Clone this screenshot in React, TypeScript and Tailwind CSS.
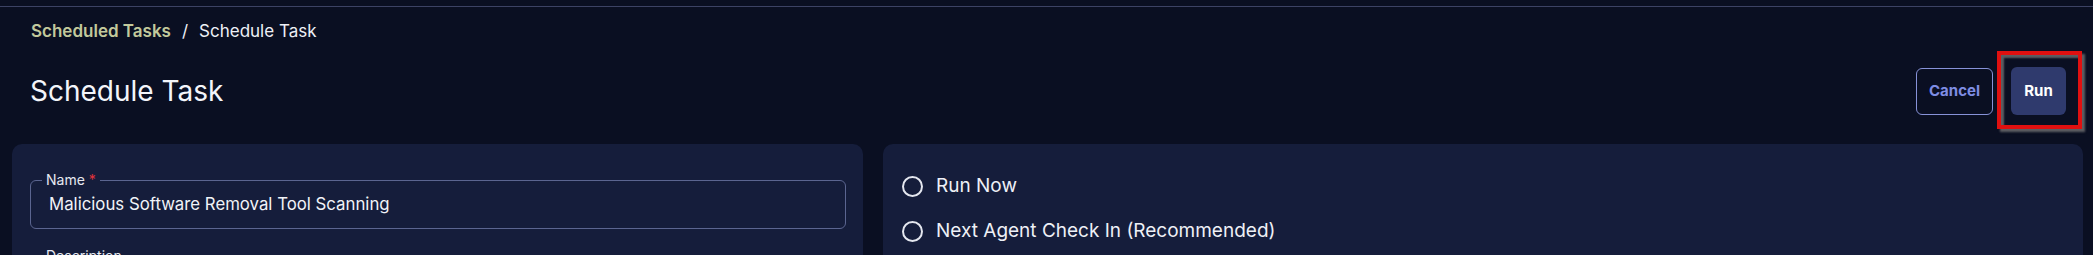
import React from 'react'

function Radio({ label }: { label: string }) {
  return (
    <label className="flex h-[45px] items-center gap-[13px] cursor-pointer">
      <span className="h-[21px] w-[21px] rounded-full border-2 border-[#e4e7ef]" />
      <span className="text-[19px] text-[#eef0f6]">{label}</span>
    </label>
  )
}

function Field({ label, value, required }: { label: string; value?: string; required?: boolean }) {
  return (
    <div className="relative flex h-[49px] items-center rounded-[6px] border border-[#5b6590] pl-[18px]">
      <span className="absolute -top-[10px] left-[11px] bg-[#151d3b] px-[4px] text-[14px] leading-[18px] text-[#e6e8f0]">
        {label}
        {required && <span className="ml-[4px] text-[#e0323a]">*</span>}
      </span>
      <span className="text-[16.8px] text-[#f1f3f8]">{value}</span>
    </div>
  )
}

export default function App() {
  return (
    <div className="h-[255px] w-[2093px] overflow-hidden bg-[#0a0f22] font-['Inter',sans-serif]">
      <div className="h-[7px] border-b border-[#3c4264]" />

      {/* Breadcrumb */}
      <div className="mt-[12px] flex h-[24px] items-center gap-[11px] pl-[31px] text-[17px] leading-[24px]">
        <span className="font-semibold text-[#c2c99c]">Scheduled Tasks</span>
        <span className="text-[#eef0f6]">/</span>
        <span className="text-[#eef0f6]">Schedule Task</span>
      </div>

      {/* Title row */}
      <div className="mt-[24px] flex h-[48px] items-center justify-between pl-[30px] pr-[27px]">
        <h1 className="text-[28px] font-normal text-[#f3f5fa]">Schedule Task</h1>
        <div className="flex items-center gap-[18px]">
          <button className="h-[47px] w-[77px] rounded-[6px] border border-[#8792d8] text-[15px] font-bold text-[#7f8de4]">
            Cancel
          </button>
          <div className="relative">
            <button className="h-[48px] w-[55px] rounded-[6px] bg-[#2f3a6d] text-[15px] font-bold text-white">
              Run
            </button>
            <div className="pointer-events-none absolute -top-[16px] -left-[14px] -right-[16px] -bottom-[14px] border-4 border-[#e01010] shadow-[3px_3px_2px_rgba(120,120,120,0.75),inset_3px_3px_2px_rgba(120,120,120,0.75)]" />
          </div>
        </div>
      </div>

      {/* Cards */}
      <div className="mt-[29px] flex gap-[20px] pl-[12px] pr-[10px]">
        <div className="h-[300px] w-[851px] rounded-[10px] bg-[#151d3b] pt-[36px] pl-[18px] pr-[17px]">
          <Field label="Name" value="Malicious Software Removal Tool Scanning" required />
          <div className="mt-[27px]">
            <Field label="Description" />
          </div>
        </div>
        <div className="h-[300px] flex-1 rounded-[10px] bg-[#151d3b] pt-[20px] pl-[19px]">
          <Radio label="Run Now" />
          <Radio label="Next Agent Check In (Recommended)" />
        </div>
      </div>
    </div>
  )
}
